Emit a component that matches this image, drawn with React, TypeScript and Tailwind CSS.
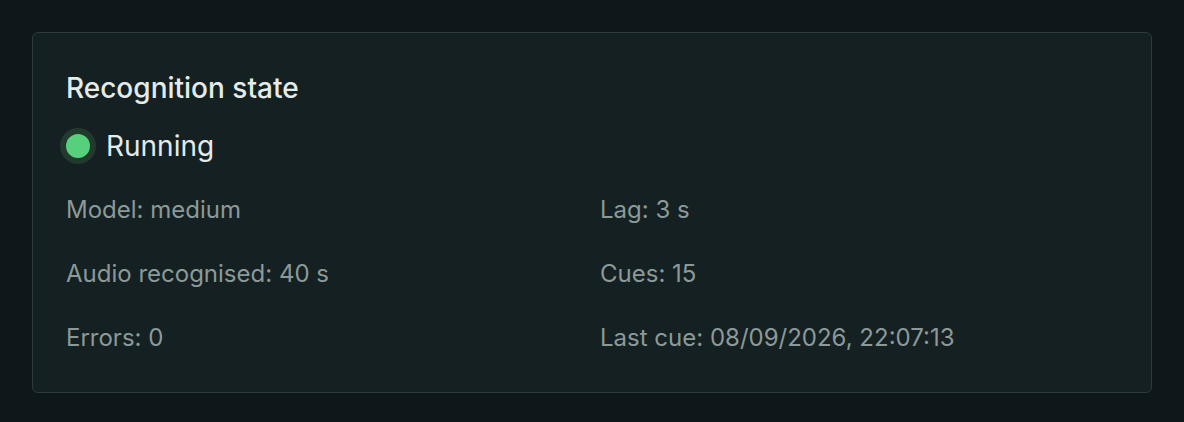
import React from 'react';

const stats: { label: string; value: string }[] = [
  { label: 'Model', value: 'medium' },
  { label: 'Lag', value: '3 s' },
  { label: 'Audio recognised', value: '40 s' },
  { label: 'Cues', value: '15' },
  { label: 'Errors', value: '0' },
  { label: 'Last cue', value: '08/09/2026, 22:07:13' },
];

const App: React.FC = () => {
  return (
    <div className="min-h-screen bg-[#0e1719] p-8" style={{ fontFamily: 'Inter, "Noto Sans", sans-serif' }}>
      <section className="rounded-md border border-[#2a3b3b] bg-[#152022] px-[33px] pt-[37px] pb-[36px]">
        <h2 className="text-[28px] leading-[36px] font-medium text-[#e4ebe9]">Recognition state</h2>
        <div className="mt-[22px] flex items-center gap-[16px]">
          <span className="h-[24px] w-[24px] rounded-full bg-[#57d07e] shadow-[0_0_0_6px_#22392e]" />
          <span className="text-[28px] leading-[36px] text-[#e4ebe9]">Running</span>
        </div>
        <div className="mt-[28px] grid grid-cols-2 gap-x-4 gap-y-[28px]">
          {stats.map(s => (
            <div key={s.label} className="text-[24px] leading-[36px] text-[#8b9a98]">
              {s.label}: {s.value}
            </div>
          ))}
        </div>
      </section>
    </div>
  );
};

export default App;
